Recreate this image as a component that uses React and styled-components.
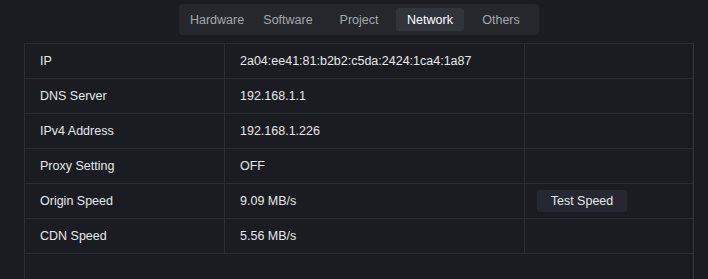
import React, { useState } from "react";
import styled, { createGlobalStyle } from "styled-components";

const GlobalStyle = createGlobalStyle`
  html, body {
    margin: 0;
    padding: 0;
    background: #1b1c21;
    font-family: "Liberation Sans", Arial, sans-serif;
    color: #e4e6ea;
  }
`;

const tabs = ["Hardware", "Software", "Project", "Network", "Others"];

const rows = [
  { label: "IP", value: "2a04:ee41:81:b2b2:c5da:2424:1ca4:1a87" },
  { label: "DNS Server", value: "192.168.1.1" },
  { label: "IPv4 Address", value: "192.168.1.226" },
  { label: "Proxy Setting", value: "OFF" },
  { label: "Origin Speed", value: "9.09 MB/s", action: "Test Speed" },
  { label: "CDN Speed", value: "5.56 MB/s" },
];

function App() {
  const [active, setActive] = useState("Network");
  return (
    <>
      <GlobalStyle />
      <Page>
        <TabBarRow>
          <TabBar>
            {tabs.map((t) => (
              <Tab key={t} $active={t === active} onClick={() => setActive(t)}>
                {t}
              </Tab>
            ))}
          </TabBar>
        </TabBarRow>
        <Panel>
          {rows.map((r) => (
            <Row key={r.label}>
              <LabelCell>{r.label}</LabelCell>
              <ValueCell>{r.value}</ValueCell>
              <ActionCell>
                {r.action && <SpeedButton>{r.action}</SpeedButton>}
              </ActionCell>
            </Row>
          ))}
        </Panel>
      </Page>
    </>
  );
}

export default App;

const Page = styled.div`
  height: 279px;
  overflow: hidden;
  padding: 4px 14px 0 24px;
  box-sizing: border-box;
`;

const TabBarRow = styled.div`
  display: flex;
  justify-content: center;
  width: 670px;
`;

const TabBar = styled.div`
  display: flex;
  gap: 3px;
  padding: 4px;
  background: #25272c;
  border-radius: 4px;
`;

const Tab = styled.div`
  width: 68px;
  height: 23px;
  display: flex;
  align-items: center;
  justify-content: center;
  font-size: 12.5px;
  border-radius: 3px;
  cursor: pointer;
  color: ${(p) => (p.$active ? "#ffffff" : "#a4a8ae")};
  background: ${(p) => (p.$active ? "#31343a" : "transparent")};
`;

const Panel = styled.div`
  margin-top: 8px;
  width: 670px;
  height: 260px;
  border: 1px solid #2b2d32;
  border-right-color: #2f3a3c;
  border-bottom: none;
  box-sizing: border-box;
`;

const Row = styled.div`
  display: grid;
  grid-template-columns: 200px 300px 1fr;
  height: 35px;
  border-bottom: 1px solid #2b2d32;
  box-sizing: border-box;
`;

const Cell = styled.div`
  display: flex;
  align-items: center;
  padding-left: 15px;
  font-size: 12.5px;
  color: #e6e8eb;
  border-right: 1px solid #2b2d32;
  box-sizing: border-box;
`;

const LabelCell = styled(Cell)``;

const ValueCell = styled(Cell)``;

const ActionCell = styled(Cell)`
  padding-left: 12px;
  border-right: none;
`;

const SpeedButton = styled.button`
  width: 90px;
  height: 22px;
  border: none;
  border-radius: 3px;
  background: #252830;
  color: #e6e8eb;
  font-family: "Liberation Sans", Arial, sans-serif;
  font-size: 12.5px;
  cursor: pointer;
  padding: 0;
`;
